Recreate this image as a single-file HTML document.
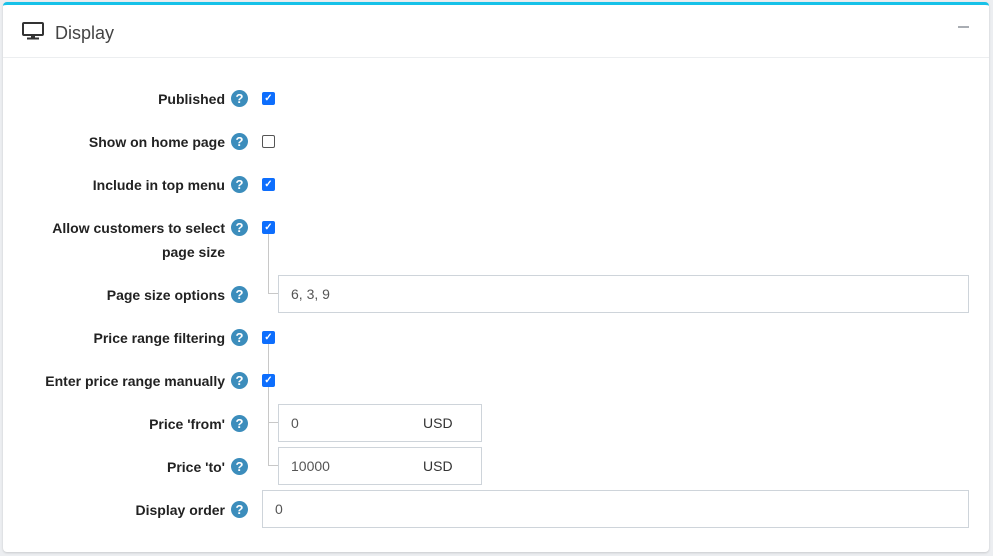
<!DOCTYPE html>
<html><head><style>
*{box-sizing:border-box;margin:0;padding:0}
body{width:993px;height:556px;background:#eceef1;font-family:"Liberation Sans",sans-serif;position:relative;overflow:hidden}
.card{position:absolute;left:3px;top:2px;width:986px;height:550px;background:#fff;border-top:3px solid #17c1e8;border-radius:4px;box-shadow:0 1px 2px rgba(0,0,0,.15)}
.hdr{position:absolute;left:0;top:0;width:100%;height:53px;border-bottom:1px solid #eceef0}
.title{position:absolute;left:52px;top:18px;font-size:18px;color:#444}
.minus{position:absolute;left:955px;top:21px;width:11px;height:2px;background:#a9adb3}
.lbl{position:absolute;right:768px;font-size:14px;font-weight:bold;color:#222;text-align:right;white-space:nowrap;margin-top:1px}
.q{position:absolute;left:231px;width:17px;height:17px;border-radius:50%;background:#3c8dbc;color:#fff;font-size:13px;font-weight:bold;text-align:center;line-height:17px}
.cb{position:absolute;left:262px;width:13px;height:13px;border-radius:2px;background:#0d6efd;color:#fff;font-size:10px;line-height:13px;text-align:center;font-weight:bold}
.cb.off{background:#fff;border:1px solid #555}
.inp{position:absolute;border:1px solid #ced4da;background:#fff;font-size:14px;color:#555;padding-left:12px;line-height:37px}
.usd{position:absolute;left:144px;top:0;color:#333}
.ln{position:absolute;background:#c8c8c8}
</style></head><body>
<div class="card">
<div class="hdr">
<svg style="position:absolute;left:19px;top:17px" width="22" height="18" viewBox="0 0 22 18"><rect x="1" y="1" width="20" height="12" rx="1" fill="none" stroke="#333" stroke-width="2"/><rect x="9" y="13" width="4" height="3" fill="#333"/><rect x="5" y="15.5" width="12" height="2" fill="#333"/></svg>
<div class="title">Display</div>
<div class="minus"></div>
</div>
</div>
<div class="lbl" style="top:90px">Published</div><div class="q" style="top:90px">?</div><div class="cb" style="top:92px">✓</div>
<div class="lbl" style="top:133px">Show on home page</div><div class="q" style="top:133px">?</div><div class="cb off" style="top:135px"></div>
<div class="lbl" style="top:176px">Include in top menu</div><div class="q" style="top:176px">?</div><div class="cb" style="top:178px">✓</div>
<div class="lbl" style="line-height:24px;top:215px">Allow customers to select<br>page size</div><div class="q" style="top:219px">?</div><div class="cb" style="top:221px">✓</div>
<div class="ln" style="left:268px;top:234px;width:1px;height:60px"></div><div class="ln" style="left:268px;top:293px;width:10px;height:1px"></div>
<div class="lbl" style="top:286px">Page size options</div><div class="q" style="top:286px">?</div>
<div class="inp" style="left:278px;top:275px;width:691px;height:38px">6, 3, 9</div>
<div class="lbl" style="top:329px">Price range filtering</div><div class="q" style="top:329px">?</div><div class="cb" style="top:331px">✓</div>
<div class="ln" style="left:268px;top:344px;width:1px;height:30px"></div>
<div class="lbl" style="top:372px">Enter price range manually</div><div class="q" style="top:372px">?</div><div class="cb" style="top:374px">✓</div>
<div class="ln" style="left:268px;top:387px;width:1px;height:79px"></div><div class="ln" style="left:268px;top:422px;width:10px;height:1px"></div><div class="ln" style="left:268px;top:465px;width:10px;height:1px"></div>
<div class="lbl" style="top:415px">Price 'from'</div><div class="q" style="top:415px">?</div>
<div class="inp" style="left:278px;top:404px;width:204px;height:38px">0<span class="usd">USD</span></div>
<div class="lbl" style="top:458px">Price 'to'</div><div class="q" style="top:458px">?</div>
<div class="inp" style="left:278px;top:447px;width:204px;height:38px">10000<span class="usd">USD</span></div>
<div class="lbl" style="top:501px">Display order</div><div class="q" style="top:501px">?</div>
<div class="inp" style="left:262px;top:490px;width:707px;height:38px">0</div>
</body></html>
